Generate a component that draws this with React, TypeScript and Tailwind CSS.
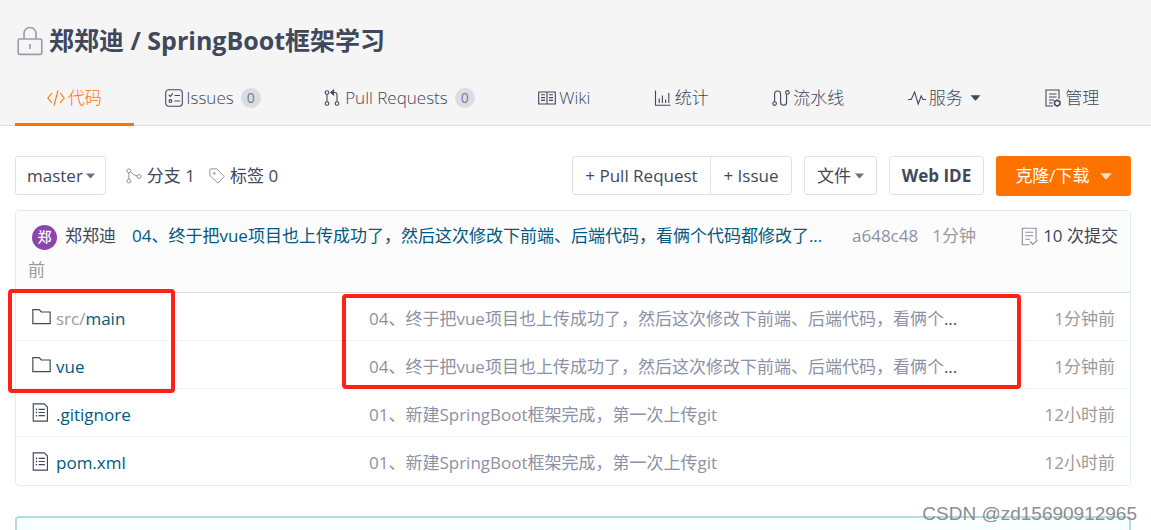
import type { ReactNode } from 'react';
import clsx from 'clsx';

const Icon = ({ children, className = 'size-[18px]' }: { children: ReactNode; className?: string }) => (
  <svg
    viewBox="0 0 18 18"
    fill="none"
    stroke="currentColor"
    strokeWidth="1.1"
    className={clsx('shrink-0', className)}
    aria-hidden="true"
  >
    {children}
  </svg>
);

const Caret = ({ className }: { className?: string }) => (
  <svg viewBox="0 0 10 6" fill="currentColor" className={clsx('shrink-0', className)} aria-hidden="true">
    <path d="M0 .3h10L5.6 5.2q-.6.6-1.2 0z" />
  </svg>
);

const LockIcon = () => (
  <svg viewBox="0 0 26 30" fill="none" stroke="#9a9fae" strokeWidth="1.7" className="h-[30px] w-[26px] shrink-0" aria-hidden="true">
    <rect x="1.2" y="13" width="23.6" height="15.4" rx="1.5" />
    <path d="M7 13V7.5a6 6 0 0 1 12 0V13M13 18v5" />
  </svg>
);

const CodeIcon = () => (
  <Icon>
    <path d="M5 4 .8 9 5 14M13 4l4.2 5-4.2 5M11 1.5 7 16.5" />
  </Icon>
);

const IssuesIcon = () => (
  <Icon>
    <rect x=".7" y=".7" width="16.6" height="16.6" rx="3" />
    <path d="m3.8 6 1.4 1.4L8 4.3M9.5 6.5H15M9.5 12H15" />
    <circle cx="5.4" cy="12" r="1.4" />
  </Icon>
);

const PullIcon = () => (
  <Icon>
    <circle cx="3" cy="3.5" r="1.8" />
    <circle cx="3" cy="14.5" r="1.8" />
    <circle cx="13" cy="14.5" r="1.8" />
    <path d="M3 5.3v7.4M13 12.7V5.5q0-2-2-2H7.5" />
    <path d="M9.5 1.2v4.6L6.8 3.5z" fill="currentColor" />
  </Icon>
);

const WikiIcon = () => (
  <Icon>
    <path d="M.7 3h16.6v12H.7zM9 3v12" />
    <path d="M3 5.8h4M3 8.6h4M3 11.4h4M11 5.8h4M11 8.6h4M11 11.4h4" />
  </Icon>
);

const StatIcon = () => (
  <Icon>
    <path d="M1.5 1.5v14.7h15M5.2 14V9.5M8.4 14V6.5M11.6 14v-3.5M14.8 14V4" />
  </Icon>
);

const PipelineIcon = () => (
  <Icon>
    <circle cx="2.6" cy="14.6" r="1.8" />
    <circle cx="15.4" cy="3.4" r="1.8" />
    <path d="M2.6 12.8V5a3 3 0 0 1 6 0v8.3a3 3 0 0 0 6 0V5.2" />
  </Icon>
);

const ServiceIcon = () => (
  <Icon>
    <path d="M0 10.5h3.2L6.6 3l3.6 12 3-8 1.7 3.5H18" />
  </Icon>
);

const ManageIcon = () => (
  <Icon>
    <path d="M9 17H2V1h13v9" />
    <path d="M5 5h7.5M5 8h7.5M5 11h5M5 14h3.5" />
    <path d="m13.2 11.2 2.6 1.4v3l-2.6 1.5-2.6-1.5v-3z" strokeWidth="1.6" />
  </Icon>
);

const BranchIcon = () => (
  <Icon className="size-4 text-[#8c92a4]">
    <circle cx="3.2" cy="3.2" r="2.2" />
    <circle cx="3.2" cy="14.6" r="2.2" />
    <circle cx="14.8" cy="9.6" r="2.2" />
    <path d="M3.2 5.4v7M5.2 4.2q2.5 4 7.4 4.8" />
  </Icon>
);

const TagIcon = () => (
  <Icon className="size-4 text-[#8c92a4]">
    <path d="M1 2.2Q1 1 2.2 1h6.6L17 9.6 10 17 1 8.4z" />
    <circle cx="6" cy="6" r=".9" fill="currentColor" />
  </Icon>
);

const CommitsIcon = () => (
  <Icon className="size-[19px] text-[#8c92a4]">
    <path d="M9 16.8H2.2V1.2h13V12" />
    <path d="M5 5h7.5M5 8.3h7.5M5 11.6h4.5M9.5 13.5l2.6 3 4.6-4.3" />
  </Icon>
);

const FolderIcon = () => (
  <Icon className="mb-1 size-[19px]">
    <path d="M.8 2.5h6l2 2.2h8.4v11.1H.8z" />
  </Icon>
);

const FileIcon = () => (
  <Icon className="mb-1 size-[19px]">
    <path d="M1.2.8h10.4l3 3v13.4H1.2z" />
    <path d="M6.2 6h6M6.2 9h6M6.2 12h6" />
    <path d="M3.6 6h1.2M3.6 9h1.2M3.6 12h1.2" strokeWidth="1.5" />
  </Icon>
);

type Tab = { label: string; icon: ReactNode; count?: number; active?: boolean; menu?: boolean };

const tabs: Tab[] = [
  { label: '代码', icon: <CodeIcon />, active: true },
  { label: 'Issues', icon: <IssuesIcon />, count: 0 },
  { label: 'Pull Requests', icon: <PullIcon />, count: 0 },
  { label: 'Wiki', icon: <WikiIcon /> },
  { label: '统计', icon: <StatIcon /> },
  { label: '流水线', icon: <PipelineIcon /> },
  { label: '服务', icon: <ServiceIcon />, menu: true },
  { label: '管理', icon: <ManageIcon /> },
];

const LONG_MESSAGE = '04、终于把vue项目也上传成功了，然后这次修改下前端、后端代码，看俩个';

const files = [
  { prefix: 'src/', name: 'main', folder: true, message: LONG_MESSAGE, cut: true, time: '1分钟前' },
  { name: 'vue', folder: true, message: LONG_MESSAGE, cut: true, time: '1分钟前' },
  { name: '.gitignore', message: '01、新建SpringBoot框架完成，第一次上传git', time: '12小时前' },
  { name: 'pom.xml', message: '01、新建SpringBoot框架完成，第一次上传git', time: '12小时前' },
];

const Header = () => (
  <header className="border-b border-[#dddddd] bg-[#f5f5f5] pr-5 pl-[15px]">
    <h1 className="flex h-[72px] items-center gap-1.5 pt-2.5 pl-0.5 text-[25px] font-bold">
      <LockIcon />
      <span>
        <a href="#owner">郑郑迪</a> / <a href="#repo">SpringBoot框架学习</a>
      </span>
    </h1>
    <nav className="-mb-px flex font-light">
      {tabs.map((tab) => (
        <a
          key={tab.label}
          href="#tab"
          className={clsx(
            'flex h-[54px] flex-auto items-center justify-center gap-[3px] border-b-3 whitespace-nowrap',
            tab.active ? 'border-[#fe7300] text-[#fe7300]' : 'border-transparent'
          )}
        >
          {tab.icon}
          <span>{tab.label}</span>
          {tab.count !== undefined && (
            <span className="ml-1 flex size-5 items-center justify-center rounded-full bg-[#dcddde] text-sm font-medium text-[#6b7aa8]">
              {tab.count}
            </span>
          )}
          {tab.menu && <Caret className="ml-1 h-[6px] w-[11px]" />}
        </a>
      ))}
    </nav>
  </header>
);

const Toolbar = () => (
  <div className="flex items-start justify-between whitespace-nowrap">
    <div className="flex h-[39px] items-center">
      <div className="flex h-full items-center rounded-[3px] border border-[#dce3e8] pr-2.5 pl-[11px]">
        <select aria-label="分支" className="field-sizing-content appearance-none bg-transparent outline-none">
          <option>master</option>
        </select>
        <Caret className="ml-[3px] h-[6px] w-[9px] text-[#6b7282]" />
      </div>
      <a href="#branches" className="ml-5 flex items-center gap-[5px]">
        <BranchIcon />
        分支 1
      </a>
      <a href="#tags" className="ml-3.5 flex items-center gap-[5px]">
        <TagIcon />
        标签 0
      </a>
    </div>

    <div className="flex items-start gap-3">
      <div className="flex h-[39px] rounded-[3px] border border-[#dce3e8]">
        <button className="w-[138px] border-r border-[#dce3e8]">+ Pull Request</button>
        <button className="w-20">+ Issue</button>
      </div>
      <button className="flex h-[39px] w-[73px] items-center justify-center gap-1 rounded-[3px] border border-[#dce3e8]">
        文件
        <Caret className="h-[6px] w-[9px] text-[#6b7282]" />
      </button>
      <button className="h-[39px] w-[95px] rounded-[3px] border border-[#dce3e8] font-bold">Web IDE</button>
      <button className="flex h-10 w-[135px] items-center justify-center gap-2.5 rounded-[3px] bg-[#fe7300] text-white">
        克隆/下载
        <Caret className="h-[7px] w-3 text-[#ffdcbf]" />
      </button>
    </div>
  </div>
);

const LatestCommit = () => (
  <div className="flex justify-between gap-8 border-b border-[#dddddd] bg-[#fcfcfc] px-3 pt-2 pb-[5px] leading-[34px]">
    <div className="min-w-0 flex-1">
      <span className="mr-2 ml-1 inline-flex size-[25px] items-center justify-center rounded-full bg-[#8e44ad] align-middle text-sm leading-5 font-medium text-white">
        郑
      </span>
      <a href="#owner">郑郑迪</a>
      <a href="#commit" className="mx-4 inline-block w-[704px] align-top whitespace-nowrap text-[#005980]">
        {LONG_MESSAGE}代码都修改了...
      </a>
      <a href="#commit" className="mr-3.5 text-[#8c92a4]">a648c48</a>
      <span className="text-[#9b9b9b]">
        1分钟
        <wbr />前
      </span>
    </div>
    <a href="#commits" className="flex h-[34px] items-center gap-1 whitespace-nowrap">
      <CommitsIcon />
      10 次提交
    </a>
  </div>
);

const FileTable = () => (
  <div className="relative">
    <table className="w-full table-fixed border-separate border-spacing-0">
      <tbody className="[&>tr:last-child>td]:border-b-0">
        {files.map((file) => (
          <tr key={file.name} className="h-12">
            <td className="w-[338px] border-b border-[#eef1f5] pt-1 pl-4">
              <a href="#file" className="flex items-center gap-[5px]">
                {file.folder ? <FolderIcon /> : <FileIcon />}
                <span className="text-[#005980]">
                  {file.prefix && <span className="text-[#9b9b9b]">{file.prefix}</span>}
                  {file.name}
                </span>
              </a>
            </td>
            <td className="border-b border-[#eef1f5] px-[15px] pt-1 whitespace-nowrap">
              <a href="#commit" className="text-[#8c92a4]">{file.message}</a>
              {file.cut && '...'}
            </td>
            <td className="w-[110px] border-b border-[#eef1f5] pt-1 pr-[15px] text-right whitespace-nowrap text-[#9b9b9b]">
              {file.time}
            </td>
          </tr>
        ))}
      </tbody>
    </table>

    {/* highlight frames */}
    <div className="pointer-events-none absolute -top-1 -left-2 h-[104px] w-[167px] rounded-[4px] border-4 border-[#ff2016]" />
    <div className="pointer-events-none absolute top-px right-[109px] left-[326px] h-[95px] rounded-[4px] border-4 border-[#ff2016]" />
  </div>
);

export default function App() {
  return (
    <div className="relative flex min-h-screen flex-col bg-white font-['Open_Sans','Noto_Sans_CJK_SC',sans-serif] text-[17px] font-normal text-[#40485b]">
      <Header />
      <main className="flex flex-1 flex-col pt-[30px] pr-5 pl-[15px]">
        <Toolbar />
        <section className="mt-3.5 rounded-[4px] border border-[#e3e9ed]">
          <LatestCommit />
          <FileTable />
        </section>
        <div className="mt-[30px] flex-1 rounded-t-[4px] border-2 border-b-0 border-[#b5dae2] bg-[#f8ffff]" />
      </main>
      <div className="absolute right-3.5 bottom-1 font-['Liberation_Sans',sans-serif] text-[19px] leading-6 text-[#8d8d8d]">
        CSDN @zd15690912965
      </div>
    </div>
  );
}
